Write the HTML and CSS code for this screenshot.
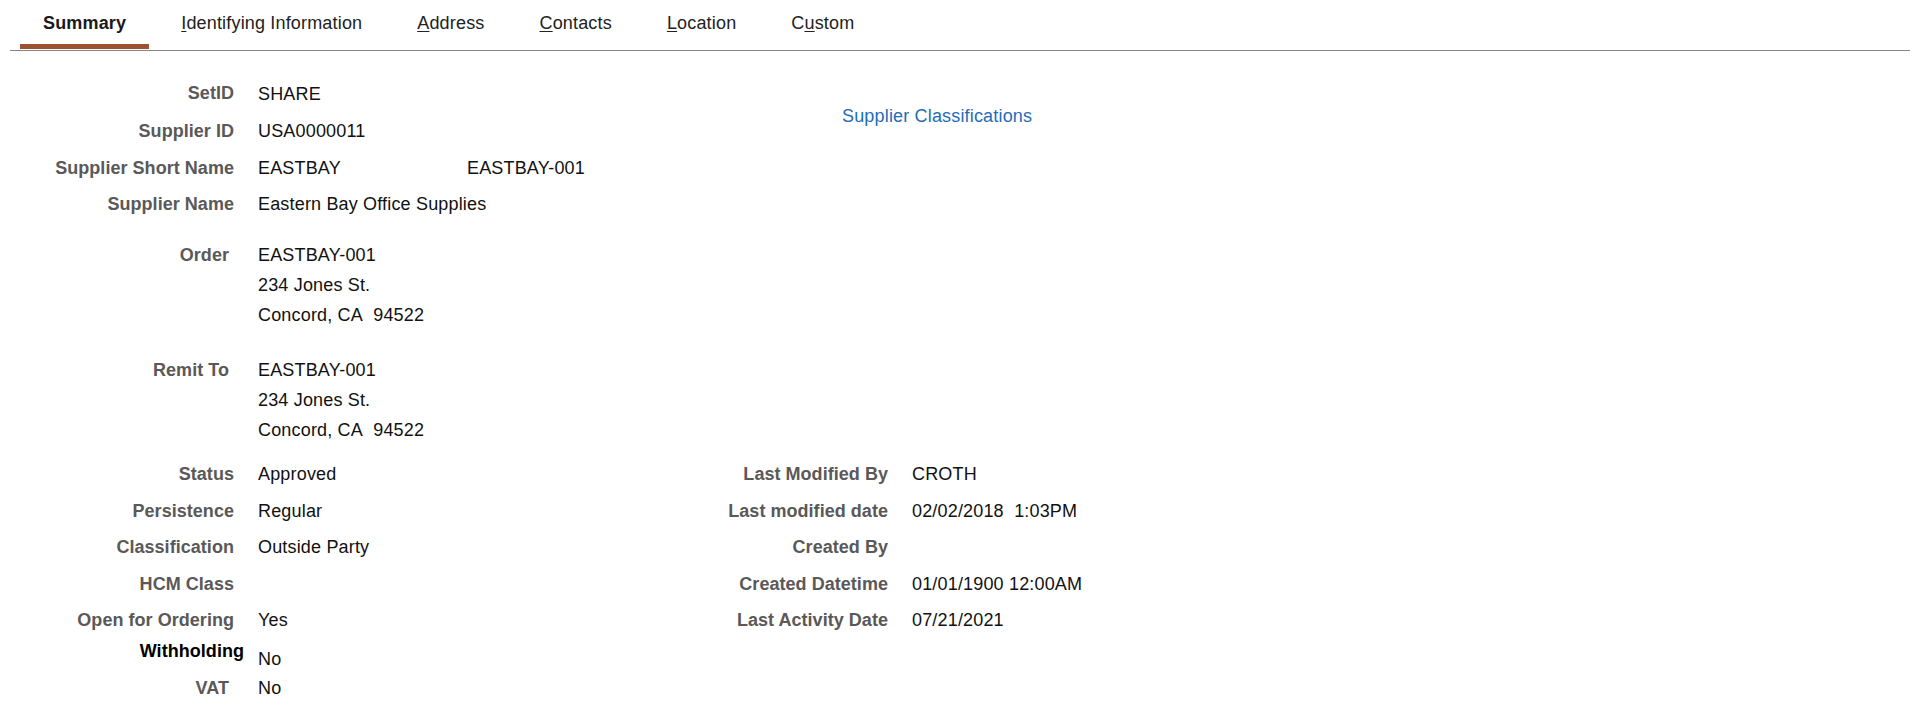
FILE: index.html
```html
<!DOCTYPE html>
<html lang="en">
<head>
<meta charset="utf-8">
<title>Supplier Summary</title>
<link rel="stylesheet" href="styles.css">
</head>
<body>
<div class="page">
  <nav class="tabs">
    <a class="tab tab-active" href="#">Summary</a>
    <a class="tab" href="#"><u>I</u>dentifying Information</a>
    <a class="tab" href="#"><u>A</u>ddress</a>
    <a class="tab" href="#"><u>C</u>ontacts</a>
    <a class="tab" href="#"><u>L</u>ocation</a>
    <a class="tab" href="#">C<u>u</u>stom</a>
  </nav>

  <main class="summary">
    <section class="top">
      <div class="ids">
        <div class="lbl">SetID</div><div class="val val-low">SHARE</div><div></div>
        <div class="lbl">Supplier ID</div><div class="val">USA0000011</div><div></div>
        <div class="lbl">Supplier Short Name</div><div class="val">EASTBAY</div><div class="val">EASTBAY-001</div>
        <div class="lbl">Supplier Name</div><div class="val">Eastern Bay Office Supplies</div><div></div>
      </div>
      <a class="classif-link" href="#">Supplier Classifications</a>
    </section>

    <section class="addr addr-order">
      <div class="lbl lbl-inset">Order</div>
      <div class="val">EASTBAY-001<br>234 Jones St.<br>Concord, CA&nbsp; 94522</div>
    </section>

    <section class="addr addr-remit">
      <div class="lbl lbl-inset">Remit To</div>
      <div class="val">EASTBAY-001<br>234 Jones St.<br>Concord, CA&nbsp; 94522</div>
    </section>

    <section class="status-grid">
      <div class="lbl">Status</div><div class="val">Approved</div>
      <div class="lbl">Last Modified By</div><div class="val">CROTH</div>

      <div class="lbl">Persistence</div><div class="val">Regular</div>
      <div class="lbl">Last modified date</div><div class="val">02/02/2018&nbsp; 1:03PM</div>

      <div class="lbl">Classification</div><div class="val">Outside Party</div>
      <div class="lbl">Created By</div><div class="val"></div>

      <div class="lbl">HCM Class</div><div class="val"></div>
      <div class="lbl">Created Datetime</div><div class="val">01/01/1900 12:00AM</div>

      <div class="lbl">Open for Ordering</div><div class="val">Yes</div>
      <div class="lbl">Last Activity Date</div><div class="val">07/21/2021</div>
    </section>

    <section class="extra">
      <div class="lbl lbl-strong">Withholding</div><div class="val val-drop">No</div>
      <div class="lbl lbl-inset">VAT</div><div class="val">No</div>
    </section>
  </main>
</div>
</body>
</html>
```

FILE: styles.css
```css
html, body {
  margin: 0;
  padding: 0;
  background: #ffffff;
}

body {
  font-family: "Liberation Sans", Arial, sans-serif;
  font-size: 18px;
  line-height: 21px;
  letter-spacing: 0.17px;
  color: #1a1a1a;
}

.page {
  margin: 0 10px;
}

/* ---------- tabs ---------- */
.tabs {
  display: flex;
  gap: 9px;
  padding-left: 10px;
  padding-bottom: 1px;
  border-bottom: 1px solid #8c8782;
}

.tab {
  display: block;
  padding: 13px 23px 10px 23px;
  border-bottom: 5px solid transparent;
  color: #222222;
  text-decoration: none;
  white-space: nowrap;
}

.tab u {
  text-decoration: underline;
  text-underline-offset: 2px;
}

.tab-active {
  font-weight: bold;
  border-bottom-color: #9c5231;
  color: #1a1a1a;
}

/* ---------- summary content ---------- */
.summary {
  padding-top: 32px;
  margin-left: -10px;
}

.lbl {
  font-weight: bold;
  color: #5a5858;
  text-align: right;
  white-space: nowrap;
  letter-spacing: 0.04px;
}

.val {
  color: #111111;
  white-space: nowrap;
}

.val-low {
  padding-top: 1px;
}

.lbl-inset {
  padding-right: 5px;
}

.lbl-strong {
  color: #000000;
  margin-right: -10px;
}

.val-drop {
  padding-top: 8px;
}

/* top block */
.top {
  display: flex;
  align-items: flex-start;
  padding-left: 20px;
}

.ids {
  width: 822px;
  flex: none;
  display: grid;
  grid-template-columns: 214px 184px auto;
  column-gap: 24px;
  row-gap: 15.75px;
}

.ids .val + .val {
  padding-left: 1px;
}

.classif-link {
  margin-top: 23px;
  color: #1f6cb9;
  text-decoration: none;
  white-space: nowrap;
}

/* address blocks */
.addr {
  display: grid;
  grid-template-columns: 214px auto;
  column-gap: 24px;
  padding-left: 20px;
  line-height: 30px;
}

.addr-order {
  margin-top: 24.5px;
}

.addr-remit {
  margin-top: 25px;
}

/* status grid */
.status-grid {
  display: grid;
  grid-template-columns: 214px 331px 275px auto;
  column-gap: 24px;
  row-gap: 15.5px;
  padding-left: 20px;
  margin-top: 19.5px;
}

/* withholding / vat */
.extra {
  display: grid;
  grid-template-columns: 214px auto;
  column-gap: 24px;
  row-gap: 7.5px;
  padding-left: 20px;
  margin-top: 10px;
}
```
